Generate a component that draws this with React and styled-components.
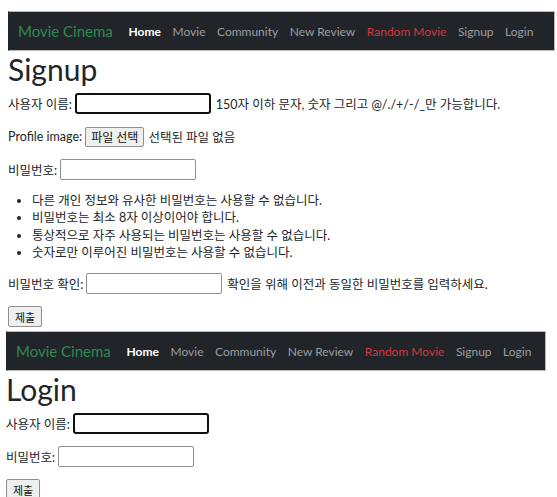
import React from "react";
import styled, { createGlobalStyle } from "styled-components";

const GlobalStyle = createGlobalStyle`
  body {
    margin: 0;
    background: #fff;
    color: #212529;
    font-family: Lato, "Noto Sans CJK KR", sans-serif;
    font-size: 12.5px;
  }
`;

const navLinks = [
  { label: "Home", active: true },
  { label: "Movie" },
  { label: "Community" },
  { label: "New Review" },
  { label: "Random Movie", danger: true },
  { label: "Signup" },
  { label: "Login" },
];

const passwordRules = [
  "다른 개인 정보와 유사한 비밀번호는 사용할 수 없습니다.",
  "비밀번호는 최소 8자 이상이어야 합니다.",
  "통상적으로 자주 사용되는 비밀번호는 사용할 수 없습니다.",
  "숫자로만 이루어진 비밀번호는 사용할 수 없습니다.",
];

const NavBar = () => (
  <Nav>
    <Brand>Movie Cinema</Brand>
    {navLinks.map((link) => (
      <NavLink key={link.label} $active={link.active} $danger={link.danger}>
        {link.label}
      </NavLink>
    ))}
  </Nav>
);

const App = () => {
  return (
    <>
      <GlobalStyle />
      <Page>
        <Section $left={8} $right={2} $bottom={4}>
          <NavBar />
          <Title>Signup</Title>
          <Field>
            <Label>사용자 이름:</Label>
            <TextInput $focused />
            <Hint>150자 이하 문자, 숫자 그리고 @/./+/-/_만 가능합니다.</Hint>
          </Field>
          <Field>
            <Label>Profile image:</Label>
            <FileButton type="button">파일 선택</FileButton>
            <FileName>선택된 파일 없음</FileName>
          </Field>
          <Field>
            <Label>비밀번호:</Label>
            <TextInput type="password" />
          </Field>
          <Rules>
            {passwordRules.map((rule) => (
              <li key={rule}>{rule}</li>
            ))}
          </Rules>
          <Field>
            <Label>비밀번호 확인:</Label>
            <TextInput type="password" />
            <Hint>확인을 위해 이전과 동일한 비밀번호를 입력하세요.</Hint>
          </Field>
          <SubmitButton type="button">제출</SubmitButton>
        </Section>

        <Section $left={6} $right={11} $bottom={0}>
          <NavBar />
          <Title>Login</Title>
          <Field>
            <Label>사용자 이름:</Label>
            <TextInput $focused />
          </Field>
          <Field>
            <Label>비밀번호:</Label>
            <TextInput type="password" />
          </Field>
          <SubmitButton type="button">제출</SubmitButton>
        </Section>
      </Page>
    </>
  );
};

const Page = styled.div`
  padding-top: 11px;
`;

const Section = styled.div`
  padding: 0 ${(p) => p.$right}px ${(p) => p.$bottom}px ${(p) => p.$left}px;
`;

const Nav = styled.nav`
  display: flex;
  align-items: center;
  height: 40px;
  box-sizing: border-box;
  padding: 0 9px;
  background: #212529;
  border: 1px solid #b9b9b9;
  border-left-color: #212529;
  white-space: nowrap;
  overflow: hidden;
`;

const Brand = styled.span`
  flex-shrink: 0;
  font-size: 15px;
  color: #2f8a4f;
  margin-right: 10px;
`;

const NavLink = styled.span`
  flex-shrink: 0;
  padding: 0 5.75px;
  font-size: 12px;
  color: ${(p) => (p.$danger ? "#d0393f" : p.$active ? "#fff" : "#9c9ea1")};
  font-weight: ${(p) => (p.$active ? 700 : 400)};
`;

const Title = styled.h1`
  margin: 0 0 6px;
  font-size: 30px;
  font-weight: 400;
  line-height: 36px;
`;

const Field = styled.div`
  display: flex;
  align-items: center;
  height: 21px;
  margin-bottom: 12px;
  white-space: nowrap;
`;

const Label = styled.label`
  margin-right: 3px;
`;

const TextInput = styled.input`
  flex-shrink: 0;
  width: 136px;
  height: 21px;
  box-sizing: border-box;
  padding: 0 2px;
  border: ${(p) => (p.$focused ? "2px solid #111" : "1px solid #8f8f8f")};
  border-radius: ${(p) => (p.$focused ? "3px" : "2px")};
  outline: none;
  background: #fff;
  font-size: 11px;
`;

const Hint = styled.span`
  margin-left: 5px;
`;

const FileButton = styled.button`
  height: 20px;
  padding: 0 5px;
  border: 1px solid #8f8f8f;
  border-radius: 2px;
  background: #efefef;
  color: #111;
  font-family: inherit;
  font-size: 12px;
`;

const FileName = styled.span`
  margin-left: 4px;
`;

const Rules = styled.ul`
  margin: 0 0 12px;
  padding-left: 24px;
  line-height: 17.25px;
`;

const SubmitButton = styled.button`
  display: block;
  height: 21px;
  padding: 0 6px;
  border: 1px solid #8f8f8f;
  border-radius: 2px;
  background: #efefef;
  color: #111;
  font-family: inherit;
  font-size: 11px;
`;

export default App;
